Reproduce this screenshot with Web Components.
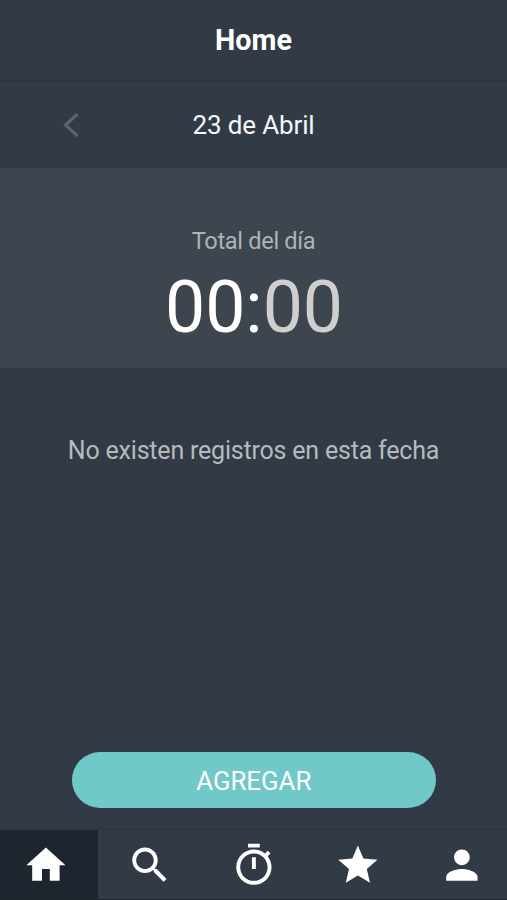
<!DOCTYPE html>
<html lang="es"><head><meta charset="utf-8"><title>Home</title>
<style>html,body{margin:0;height:100%;overflow:hidden;background:#323b45}</style></head>
<body><home-screen></home-screen>
<script>
const define=(name,html,init)=>customElements.define(name,class extends HTMLElement{
  constructor(){super();this.attachShadow({mode:'open'}).innerHTML=html;}
  connectedCallback(){if(init)init(this);}
});
const icons={
 home:'M10 20v-6h4v6h5v-8h3L12 3 2 12h3v8z',
 search:'M15.5 14h-.79l-.28-.27C15.41 12.59 16 11.11 16 9.5 16 5.91 13.09 3 9.5 3S3 5.91 3 9.5 5.91 16 9.5 16c1.61 0 3.09-.59 4.23-1.57l.27.28v.79l5 4.99L20.49 19l-4.99-5zm-6 0C7.01 14 5 11.99 5 9.5S7.01 5 9.5 5 14 7.01 14 9.5 11.99 14 9.5 14z',
 timer:'M15 1H9v2h6V1zm-4 13h2V8h-2v6zm8.03-6.61l1.42-1.42c-.43-.51-.9-.99-1.41-1.41l-1.42 1.42C16.07 4.74 14.12 4 12 4c-4.97 0-9 4.03-9 9s4.02 9 9 9 9-4.03 9-9c0-2.12-.74-4.07-1.97-5.61zM12 20c-3.87 0-7-3.13-7-7s3.13-7 7-7 7 3.13 7 7-3.13 7-7 7z',
 star:'M12 17.27L18.18 21l-1.64-7.03L22 9.24l-7.19-.61L12 2 9.19 8.63 2 9.24l5.46 4.73L5.82 21z',
 person:'M12 12c2.21 0 4-1.79 4-4s-1.79-4-4-4-4 1.79-4 4 1.79 4 4 4zm0 2c-2.67 0-8 1.34-8 4v2h16v-2c0-2.66-5.33-4-8-4z'
};
define('app-title',`<style>:host{display:flex;box-sizing:border-box;height:82px;align-items:center;justify-content:center;border-bottom:2px solid #2b343d;color:#fff;font-weight:700;font-size:28.7px}</style><slot></slot>`);
define('date-bar',`<style>:host{display:grid;grid-template-columns:142px 1fr 142px;align-items:center;height:86px;color:#f4f8fc;font-size:26px;letter-spacing:-.14px;text-align:center}svg{display:block;justify-self:center}</style>
<svg width="18" height="28" viewBox="0 0 18 28"><path d="M15.5 3 3.5 14 15.5 25" fill="none" stroke="#59636b" stroke-width="3.2"/></svg><span><slot></slot></span>`);
define('day-total',`<style>:host{display:flex;box-sizing:border-box;height:200px;flex-direction:column;align-items:center;padding-top:58px;background:#3d464e}
.label{font-size:23.6px;letter-spacing:-.33px;line-height:30px;color:#adb3b7}.time{font-size:71.5px;line-height:84px;margin-top:10px;padding-left:1px;color:#fff;white-space:nowrap}.min{color:#cfcfd0}</style>
<div class="label"><slot></slot></div><div class="time"><slot name="hours"></slot>:<span class="min"><slot name="minutes"></slot></span></div>`);
define('empty-note',`<style>:host{display:block;flex:1;padding-top:68px;text-align:center;font-size:25px;letter-spacing:-.2px;line-height:30px;color:#b5babe;white-space:nowrap}</style><slot></slot>`);
define('add-button',`<style>:host{display:block;margin:0 71.5px 21px 72px}button{display:block;width:100%;height:56px;padding:2px 0 0;border:0;border-radius:28px;background:#70c8c8;color:#fff;font:400 25.8px Roboto,sans-serif}</style><button><slot></slot></button>`);
define('nav-item',`<style>:host{display:flex;flex:0 0 104px;box-sizing:border-box;align-items:center;justify-content:center;padding:1px 0 0}:host([active]){background:#1e252e}svg{display:block;width:47px;height:47px;fill:#fff}</style><svg viewBox="-0.2 0.15 24 24"><path/></svg>`,
 el=>el.shadowRoot.querySelector('path').setAttribute('d',icons[el.getAttribute('icon')]));
define('nav-bar',`<style>:host{display:flex;box-sizing:border-box;height:71px;justify-content:center;overflow:hidden;border-top:1px solid #2b343d;border-bottom:1px solid #1d252d}</style><slot></slot>`);
define('home-screen',`<style>:host{display:flex;flex-direction:column;width:507px;height:900px;background:#323b45;font-family:Roboto,sans-serif}</style>
<app-title>Home</app-title><date-bar>23 de Abril</date-bar>
<day-total>Total del día<span slot="hours">00</span><span slot="minutes">00</span></day-total>
<empty-note>No existen registros en esta fecha</empty-note>
<add-button>AGREGAR</add-button>
<nav-bar><nav-item icon="home" active></nav-item><nav-item icon="search"></nav-item><nav-item icon="timer"></nav-item><nav-item icon="star"></nav-item><nav-item icon="person"></nav-item></nav-bar>`);
</script></body></html>
